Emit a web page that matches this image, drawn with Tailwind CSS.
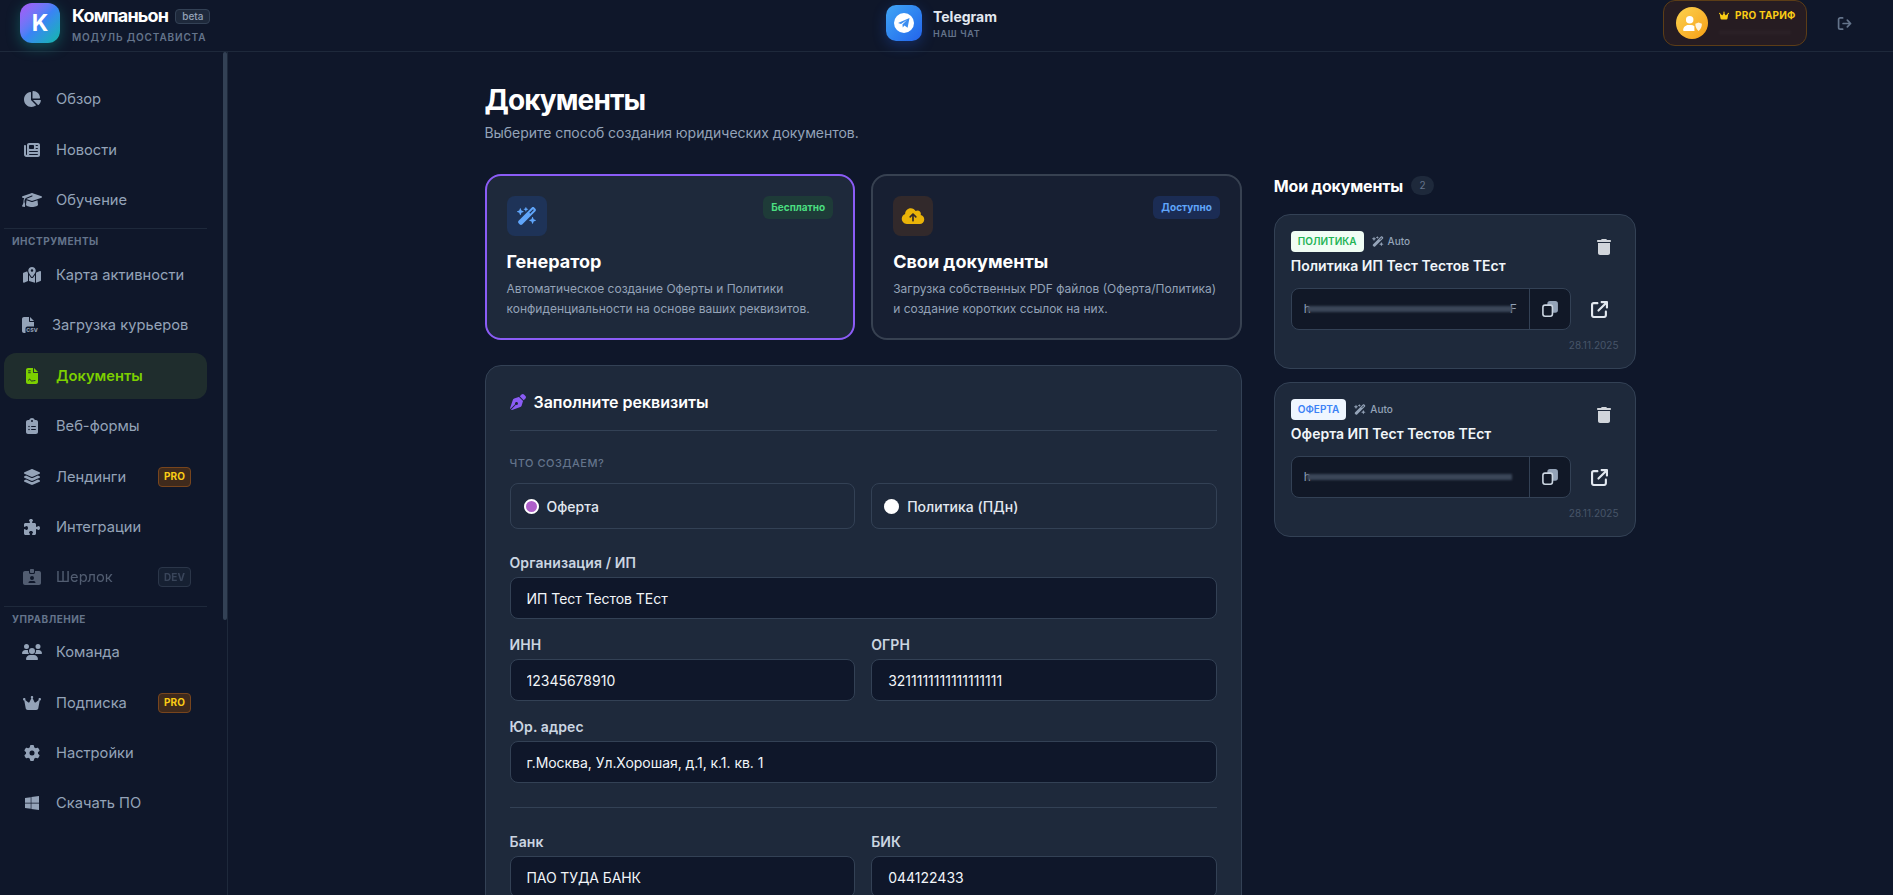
<!DOCTYPE html>
<html lang="ru">
<head>
  <meta charset="UTF-8">
  <meta name="viewport" content="width=device-width, initial-scale=1.0">
  <title>Компаньон - Документы</title>
  <script src="https://cdn.jsdelivr.net/npm/@tailwindcss/browser@4"></script>
</head>
<body class="h-screen overflow-hidden bg-[#0f172a] text-white [font-family:Inter,sans-serif]">

  <!-- top bar -->
  <header class="grid h-[52px] grid-cols-[1fr_121px_1fr] items-center border-b border-[#1e293b] pb-[8px]">
    <div class="flex items-center pl-[20px]">
      <div class="flex h-10 w-10 items-center justify-center rounded-xl bg-gradient-to-br from-[#a855f7] via-[#3b82f6] to-[#14b8a6] text-[23px] font-bold shadow-[0_4px_14px_rgba(20,184,166,0.35)]">K</div>
      <div class="ml-3">
        <div class="flex items-center gap-[7px]">
          <span class="text-[18px] leading-[28px] font-bold tracking-[-0.8px]">Компаньон</span>
          <span class="rounded-[4px] border border-[#334155] bg-[#1e293b] px-[6px] text-[10px] leading-[13px] font-medium text-[#94a3b8]">beta</span>
        </div>
        <div class="text-[10px] leading-[14px] font-semibold tracking-[0.85px] text-[#64748b]">МОДУЛЬ ДОСТАВИСТА</div>
      </div>
    </div>

    <div class="flex items-center gap-[11px]">
      <div class="flex h-9 w-9 shrink-0 items-center justify-center rounded-[10px] bg-gradient-to-br from-[#42a5f5] to-[#2563eb] shadow-[0_4px_14px_rgba(37,99,235,0.3)]">
        <svg viewBox="0 0 20 20" class="h-5 w-5"><circle cx="10" cy="10" r="10" fill="#fff"/><path d="M4 10 15.500 5 13.600 14.800 10.400 12.600 8.800 14.400 8.400 11.500 13 7 7 10.900Z" fill="#3b8df0"/></svg>
      </div>
      <div>
        <div class="text-[14px] leading-[20px] font-bold text-[#e2e8f0]">Telegram</div>
        <div class="mt-px text-[9px] leading-[12px] font-semibold tracking-[0.7px] text-[#64748b]">НАШ ЧАТ</div>
      </div>
    </div>

    <div class="flex items-center justify-end gap-[30px] pr-[41px]">
      <div class="flex h-[46px] w-[144px] items-center gap-[11px] rounded-xl border border-[#5c3d17] bg-[#261c22] pl-[12px]">
        <div class="flex h-8 w-8 items-center justify-center rounded-full bg-gradient-to-br from-[#fcd34d] to-[#f59e0b]">
          <svg viewBox="0 0 640 512" class="h-[15px] w-[19px]" fill="#fff"><path d="M224 256A128 128 0 1 0 224 0a128 128 0 1 0 0 256zm-45.700 48C79.800 304 0 383.800 0 482.300C0 498.700 13.300 512 29.700 512H392.600c-5.400-9.400-8.600-20.300-8.600-32V352c0-2.100 .1-4.200 .3-6.300c-31-26-71-41.700-114.600-41.700H178.300z"/><path d="M528 224l112 44c0 100-35 190-112 244-77-54-112-144-112-244z" opacity="0.85"/></svg>
        </div>
        <div class="flex flex-col self-start pt-[7px]">
          <div class="flex items-center gap-[6px] text-[10px] leading-[15px] font-bold tracking-[0.2px] text-[#facc15]">
            <svg viewBox="0 0 576 512" class="h-[9px] w-[10px]" fill="#facc15"><path d="M309 106c11.400-7 19-19.700 19-34c0-22.100-17.900-40-40-40s-40 17.900-40 40c0 14.400 7.600 27 19 34L209.700 220.600c-9.100 18.200-32.700 23.400-48.600 10.700L72 160c5-6.700 8-15 8-24c0-22.100-17.900-40-40-40S0 113.900 0 136s17.900 40 40 40c.2 0 .5 0 .7 0L86.400 427.400c5.500 30.400 32 52.600 63 52.600H426.600c30.900 0 57.400-22.100 63-52.600L535.300 176c.2 0 .5 0 .7 0c22.100 0 40-17.900 40-40s-17.900-40-40-40s-40 17.900-40 40c0 9 3 17.300 8 24l-89.100 71.300c-15.900 12.700-39.500 7.500-48.600-10.700L309 106z"/></svg>
            PRO ТАРИФ
          </div>
          <div class="mt-[7px] h-[5px] w-[72px] bg-white/[0.02] blur-[1px]"></div>
        </div>
      </div>
      <svg viewBox="0 0 16 16" class="h-[15px] w-[15px]" fill="none" stroke="#64748b" stroke-width="1.800" stroke-linecap="round" stroke-linejoin="round"><path d="M6 2H3.500A1.800 1.800 0 0 0 1.700 3.800v8.400A1.800 1.800 0 0 0 3.500 14H6M6.500 8h8M11 4.500 14.500 8 11 11.500"/></svg>
    </div>
  </header>

  <div class="flex h-[843px]">
    <!-- sidebar -->
    <aside class="relative w-[228px] shrink-0 border-r border-[#1e293b] pl-[4px] pt-[24px]">
      <div class="absolute top-0 right-0 h-[568px] w-[4px] rounded-full bg-[#334155]"></div>
      <nav class="flex w-[203px] flex-col gap-[4px] text-[14.700px] text-[#94a3b8]">
        <a class="flex h-[46.400px] items-center gap-[14px] pl-[18px]">
          <svg viewBox="0 0 576 512" class="h-4 w-5" fill="currentColor"><path d="M304 240V16.600c0-9 7-16.600 16-16.600C443.700 0 544 100.300 544 224c0 9-7.600 16-16.600 16H304zM32 272C32 150.700 122.100 50.300 239 34.300c9.200-1.300 17 6.100 17 15.400V288L412.500 444.500c6.700 6.700 6.200 17.700-1.500 23.100C371.800 495.600 323.800 512 272 512C139.500 512 32 404.600 32 272zm526.400 16c9.300 0 16.600 7.800 15.400 17c-7.700 55.900-34.600 105.600-73.900 142.300c-6 5.600-15.400 5.200-21.200-.7L320 288H558.400z"/></svg>
          Обзор
        </a>
        <a class="flex h-[46.400px] items-center gap-[14px] pl-[18px]">
          <svg viewBox="0 0 512 512" class="h-4 w-5" fill="currentColor"><path d="M96 96c0-35.300 28.700-64 64-64H448c35.300 0 64 28.700 64 64V416c0 35.300-28.700 64-64 64H80c-44.200 0-80-35.800-80-80V128c0-17.700 14.300-32 32-32s32 14.300 32 32V400c0 8.800 7.200 16 16 16s16-7.200 16-16V96zm64 24v80c0 13.300 10.700 24 24 24H296c13.300 0 24-10.700 24-24V120c0-13.300-10.700-24-24-24H184c-13.300 0-24 10.700-24 24zm208-8c0 8.800 7.200 16 16 16h48c8.800 0 16-7.200 16-16s-7.200-16-16-16H384c-8.800 0-16 7.200-16 16zm0 96c0 8.800 7.200 16 16 16h48c8.800 0 16-7.200 16-16s-7.200-16-16-16H384c-8.800 0-16 7.200-16 16zM160 304c0 8.800 7.200 16 16 16H432c8.800 0 16-7.200 16-16s-7.200-16-16-16H176c-8.800 0-16 7.200-16 16zm0 96c0 8.800 7.200 16 16 16H432c8.800 0 16-7.200 16-16s-7.200-16-16-16H176c-8.800 0-16 7.200-16 16z"/></svg>
          Новости
        </a>
        <a class="flex h-[46.400px] items-center gap-[14px] pl-[18px]">
          <svg viewBox="0 0 640 512" class="h-4 w-5" fill="currentColor"><path d="M320 32c-8.100 0-16.100 1.400-23.700 4.100L15.800 137.400C6.300 140.900 0 149.900 0 160s6.300 19.100 15.800 22.600l57.900 20.900C57.300 229.300 48 259.800 48 291.900v28.100c0 28.400-10.800 57.700-22.300 80.800c-6.500 13-13.900 25.800-22.500 37.600C0 442.700-.9 448.300 .9 453.400s6 8.900 11.200 10.200l64 16c4.200 1.100 8.700 .3 12.400-2s6.300-6.100 7.100-10.400c8.600-42.800 4.300-81.200-2.100-108.700C90.300 344.300 86 329.800 80 316.500V291.900c0-30.200 10.200-58.700 27.900-81.500c12.900-15.500 29.600-28 49.200-35.700l157-61.700c8.200-3.200 17.500 .8 20.700 9s-.8 17.500-9 20.700l-157 61.700c-12.400 4.900-23.300 12.400-32.200 21.600l159.600 57.600c7.600 2.700 15.600 4.100 23.700 4.100s16.100-1.400 23.700-4.100L624.200 182.600c9.500-3.400 15.800-12.500 15.800-22.600s-6.300-19.100-15.800-22.600L343.700 36.100C336.100 33.400 328.100 32 320 32zM128 408c0 35.300 86 72 192 72s192-36.700 192-72L496.700 262.600 354.500 314c-11.100 4-22.800 6-34.500 6s-23.500-2-34.500-6L143.300 262.600 128 408z"/></svg>
          Обучение
        </a>

        <div class="mt-px -mb-[4px] h-[23.600px] border-t border-[#1e293b] pt-[6px] pl-[8px] text-[10px] leading-[12px] font-bold tracking-[0.5px] text-[#64748b]">ИНСТРУМЕНТЫ</div>

        <a class="flex h-[46.400px] items-center gap-[14px] pl-[18px]">
          <svg viewBox="0 0 576 512" class="h-4 w-5" fill="currentColor"><path d="M408 120c0 54.600-73.100 151.900-105.200 192c-7.700 9.600-22 9.600-29.600 0C241.100 271.900 168 174.600 168 120C168 53.700 221.700 0 288 0s120 53.700 120 120zm8 80.400c3.500-6.900 6.700-13.800 9.600-20.600c.5-1.200 1-2.500 1.500-3.700l116-46.400C558.900 123.400 576 135 576 152V422.800c0 9.800-6 18.600-15.100 22.300L416 503V200.400zM137.600 138.300c2.400 14.100 7.200 28.300 12.800 41.500c2.900 6.800 6.100 13.700 9.600 20.600V451.800L32.900 502.700C17.100 509 0 497.400 0 480.400V209.600c0-9.800 6-18.600 15.100-22.300l122.600-49zM327.800 332c13.900-17.400 35.700-45.700 56.200-77V504.300L192 449.400V255c20.500 31.300 42.300 59.600 56.200 77c20.500 25.600 59.100 25.600 79.600 0zM288 152a40 40 0 1 0 0-80 40 40 0 1 0 0 80z"/></svg>
          Карта активности
        </a>
        <a class="flex h-[46.400px] items-center gap-[14px] pl-[18px]">
          <svg viewBox="0 0 512 512" class="h-4 w-4 overflow-visible" fill="currentColor"><path d="M0 64C0 28.700 28.700 0 64 0H224V128c0 17.700 14.300 32 32 32H384V304H176c-35.300 0-64 28.700-64 64V512H64c-35.300 0-64-28.700-64-64V64zM384 128H256V0L384 128z"/><text x="135" y="490" font-size="170" font-weight="800" font-family="Inter, sans-serif">CSV</text></svg>
          Загрузка курьеров
        </a>
        <a class="flex h-[46.400px] items-center gap-[14px] rounded-xl bg-[#1f2d2d] pl-[18px] font-semibold text-[#7ccf00]">
          <svg viewBox="0 0 384 512" class="h-4 w-5" fill="currentColor"><path d="M64 0C28.700 0 0 28.700 0 64V448c0 35.300 28.700 64 64 64H320c35.300 0 64-28.700 64-64V160H256c-17.700 0-32-14.300-32-32V0H64zM256 0V128H384L256 0z"/><path d="M70 90h80M70 150h80M80 400c40-90 50-30 70 0s50 10 150 0" fill="none" stroke="#1f2d2d" stroke-width="30"/></svg>
          Документы
        </a>
        <a class="flex h-[46.400px] items-center gap-[14px] pl-[18px]">
          <svg viewBox="0 0 384 512" class="h-4 w-5" fill="currentColor"><path d="M192 0c-41.800 0-77.400 26.700-90.500 64H64C28.700 64 0 92.700 0 128V448c0 35.300 28.700 64 64 64H320c35.300 0 64-28.700 64-64V128c0-35.300-28.700-64-64-64H282.500C269.400 26.700 233.800 0 192 0zm0 64a32 32 0 1 1 0 64 32 32 0 1 1 0-64zM72 272a24 24 0 1 1 48 0 24 24 0 1 1 -48 0zm104-16H304c8.800 0 16 7.200 16 16s-7.200 16-16 16H176c-8.800 0-16-7.200-16-16s7.200-16 16-16zM72 368a24 24 0 1 1 48 0 24 24 0 1 1 -48 0zm88 0c0-8.800 7.200-16 16-16H304c8.800 0 16 7.200 16 16s-7.200 16-16 16H176c-8.800 0-16-7.200-16-16z"/></svg>
          Веб-формы
        </a>
        <a class="flex h-[46.400px] items-center pl-[18px]">
          <svg viewBox="0 0 576 512" class="mr-[14px] h-4 w-5" fill="currentColor"><path d="M264.500 5.200c14.900-6.900 32.100-6.900 47 0l218.600 101c8.500 3.900 13.900 12.400 13.900 21.800s-5.400 17.900-13.900 21.800l-218.600 101c-14.900 6.900-32.100 6.900-47 0L45.900 149.800C37.400 145.800 32 137.300 32 128s5.400-17.900 13.900-21.800L264.500 5.200zM476.900 209.600l53.200 24.600c8.500 3.900 13.900 12.400 13.900 21.800s-5.400 17.900-13.900 21.800l-218.600 101c-14.900 6.900-32.100 6.900-47 0L45.900 277.800C37.400 273.800 32 265.300 32 256s5.400-17.900 13.900-21.800l53.200-24.600 152 70.200c23.400 10.800 50.400 10.800 73.800 0l152-70.200zm-152 198.200l152-70.200 53.200 24.600c8.500 3.900 13.900 12.400 13.900 21.800s-5.400 17.900-13.900 21.800l-218.600 101c-14.900 6.900-32.100 6.900-47 0L45.900 405.800C37.400 401.800 32 393.300 32 384s5.400-17.900 13.900-21.800l53.200-24.600 152 70.200c23.400 10.800 50.400 10.800 73.800 0z"/></svg>
          Лендинги
          <span class="mr-[16px] ml-auto flex h-[20px] w-[33px] items-center justify-center rounded-[4px] border border-[#78451d] bg-[#3f2a1c] text-[10px] font-bold text-[#facc15]">PRO</span>
        </a>
        <a class="flex h-[46.400px] items-center gap-[14px] pl-[18px]">
          <svg viewBox="0 0 512 512" class="h-4 w-5" fill="currentColor"><path d="M192 104.800c0-9.200-5.800-17.300-13.200-22.800C167.200 73.300 160 61.300 160 48c0-26.500 28.700-48 64-48s64 21.500 64 48c0 13.300-7.200 25.300-18.800 34c-7.400 5.500-13.200 13.600-13.200 22.800c0 12.800 10.400 23.200 23.200 23.200H336c26.500 0 48 21.500 48 48v56.800c0 12.800 10.400 23.200 23.200 23.200c9.200 0 17.300-5.800 22.800-13.200c8.700-11.600 20.700-18.800 34-18.800c26.500 0 48 28.700 48 64s-21.500 64-48 64c-13.300 0-25.300-7.200-34-18.800c-5.500-7.400-13.600-13.200-22.800-13.200c-12.800 0-23.200 10.400-23.200 23.200V464c0 26.500-21.500 48-48 48H279.200c-12.800 0-23.200-10.400-23.200-23.200c0-9.200 5.800-17.300 13.200-22.800c11.600-8.700 18.800-20.700 18.800-34c0-26.500-28.700-48-64-48s-64 21.500-64 48c0 13.300 7.200 25.300 18.800 34c7.400 5.500 13.200 13.600 13.200 22.800c0 12.800-10.400 23.200-23.200 23.200H48c-26.500 0-48-21.500-48-48V343.200C0 330.400 10.400 320 23.200 320c9.200 0 17.300 5.800 22.800 13.200C54.700 344.800 66.700 352 80 352c26.500 0 48-28.700 48-64s-21.500-64-48-64c-13.300 0-25.300 7.200-34 18.800C40.500 250.200 32.400 256 23.200 256C10.400 256 0 245.600 0 232.800V176c0-26.500 21.500-48 48-48H168.800c12.800 0 23.200-10.400 23.200-23.200z"/></svg>
          Интеграции
        </a>
        <a class="flex h-[46.400px] items-center pl-[18px] opacity-50">
          <svg viewBox="0 0 576 512" class="mr-[14px] h-4 w-5" fill="currentColor"><path d="M256 0h64c17.700 0 32 14.300 32 32V96c0 17.700-14.300 32-32 32H256c-17.700 0-32-14.300-32-32V32c0-17.700 14.300-32 32-32zM64 64H192v48c0 26.500 21.500 48 48 48h96c26.500 0 48-21.500 48-48V64H512c35.300 0 64 28.700 64 64V448c0 35.300-28.700 64-64 64H64c-35.300 0-64-28.700-64-64V128C0 92.700 28.700 64 64 64zM176 437.300c0 5.900 4.800 10.700 10.700 10.700H389.300c5.900 0 10.700-4.800 10.700-10.700c0-29.500-23.900-53.300-53.300-53.300H229.300c-29.500 0-53.300 23.900-53.300 53.300zM288 352a64 64 0 1 0 0-128 64 64 0 1 0 0 128z"/></svg>
          Шерлок
          <span class="mr-[16px] ml-auto flex h-[20px] w-[33px] items-center justify-center rounded-[4px] border border-[#475569] bg-[#1e293b] text-[10px] font-bold text-[#64748b]">DEV</span>
        </a>

        <div class="mt-px -mb-[4px] h-[23.600px] border-t border-[#1e293b] pt-[6px] pl-[8px] text-[10px] leading-[12px] font-bold tracking-[0.5px] text-[#64748b]">УПРАВЛЕНИЕ</div>

        <a class="flex h-[46.400px] items-center gap-[14px] pl-[18px]">
          <svg viewBox="0 0 640 512" class="h-4 w-5" fill="currentColor"><path d="M144 0a80 80 0 1 1 0 160A80 80 0 1 1 144 0zM512 0a80 80 0 1 1 0 160A80 80 0 1 1 512 0zM0 298.700C0 239.800 47.800 192 106.700 192h42.700c15.900 0 31 3.500 44.600 9.700c-1.300 7.200-1.900 14.700-1.900 22.300c0 38.200 16.800 72.500 43.300 96c-.2 0-.4 0-.7 0H21.300C9.600 320 0 310.400 0 298.700zM405.300 320c-.2 0-.4 0-.7 0c26.600-23.500 43.300-57.800 43.300-96c0-7.600-.7-15-1.900-22.300c13.600-6.300 28.700-9.700 44.600-9.700h42.700C592.200 192 640 239.800 640 298.700c0 11.800-9.600 21.300-21.300 21.300H405.300zM224 224a96 96 0 1 1 192 0 96 96 0 1 1 -192 0zM128 485.300C128 411.700 187.700 352 261.300 352H378.700C452.300 352 512 411.700 512 485.300c0 14.700-11.900 26.700-26.700 26.700H154.700c-14.700 0-26.700-11.900-26.700-26.700z"/></svg>
          Команда
        </a>
        <a class="flex h-[46.400px] items-center pl-[18px]">
          <svg viewBox="0 0 576 512" class="mr-[14px] h-4 w-5" fill="currentColor"><path d="M309 106c11.400-7 19-19.700 19-34c0-22.100-17.900-40-40-40s-40 17.900-40 40c0 14.400 7.600 27 19 34L209.700 220.600c-9.100 18.200-32.700 23.400-48.600 10.700L72 160c5-6.700 8-15 8-24c0-22.100-17.900-40-40-40S0 113.900 0 136s17.900 40 40 40c.2 0 .5 0 .7 0L86.400 427.400c5.500 30.400 32 52.600 63 52.600H426.600c30.900 0 57.400-22.100 63-52.600L535.300 176c.2 0 .5 0 .7 0c22.100 0 40-17.900 40-40s-17.900-40-40-40s-40 17.900-40 40c0 9 3 17.300 8 24l-89.100 71.300c-15.900 12.700-39.500 7.500-48.600-10.700L309 106z"/></svg>
          Подписка
          <span class="mr-[16px] ml-auto flex h-[20px] w-[33px] items-center justify-center rounded-[4px] border border-[#78451d] bg-[#3f2a1c] text-[10px] font-bold text-[#facc15]">PRO</span>
        </a>
        <a class="flex h-[46.400px] items-center gap-[14px] pl-[18px]">
          <svg viewBox="0 0 512 512" class="h-4 w-5" fill="currentColor"><path fill-rule="evenodd" d="M495.900 166.600c3.200 8.700 .5 18.400-6.400 24.600l-43.300 39.400c1.100 8.300 1.700 16.800 1.700 25.400s-.6 17.100-1.700 25.400l43.300 39.400c6.900 6.200 9.600 15.900 6.400 24.600c-4.400 11.900-9.700 23.300-15.800 34.300l-4.700 8.100c-6.600 11-14 21.400-22.100 31.200c-5.900 7.200-15.700 9.600-24.500 6.800l-55.700-17.700c-13.400 10.300-28.200 18.900-44 25.400l-12.500 57.100c-2 9.100-9 16.300-18.200 17.800c-13.800 2.300-28 3.500-42.500 3.500s-28.700-1.200-42.500-3.500c-9.200-1.500-16.200-8.700-18.200-17.800l-12.500-57.100c-15.800-6.500-30.600-15.100-44-25.400L83.100 425.900c-8.800 2.800-18.600 .3-24.500-6.800c-8.100-9.800-15.500-20.200-22.100-31.200l-4.700-8.100c-6.100-11-11.400-22.400-15.800-34.300c-3.200-8.700-.5-18.400 6.400-24.600l43.300-39.400C64.600 273.100 64 264.600 64 256s.6-17.100 1.700-25.400L22.400 191.200c-6.900-6.200-9.600-15.900-6.400-24.600c4.400-11.900 9.700-23.300 15.800-34.300l4.700-8.100c6.600-11 14-21.400 22.100-31.200c5.900-7.200 15.700-9.600 24.500-6.800l55.700 17.700c13.400-10.300 28.200-18.900 44-25.400l12.500-57.100c2-9.100 9-16.300 18.200-17.800C227.300 1.200 241.500 0 256 0s28.700 1.200 42.500 3.500c9.200 1.500 16.200 8.700 18.200 17.800l12.500 57.100c15.800 6.500 30.600 15.100 44 25.400l55.700-17.700c8.800-2.800 18.600-.3 24.500 6.800c8.100 9.800 15.500 20.200 22.100 31.200l4.700 8.100c6.100 11 11.400 22.400 15.800 34.300zM256 336a80 80 0 1 0 0-160 80 80 0 1 0 0 160z"/></svg>
          Настройки
        </a>
        <a class="flex h-[46.400px] items-center gap-[14px] pl-[18px]">
          <svg viewBox="0 0 448 512" class="h-4 w-5" fill="currentColor"><path d="M0 93.700l183.600-25.300v177.400H0V93.700zm0 324.600l183.600 25.300V268.400H0v149.900zm203.800 28L448 480V268.400H203.800v177.900zm0-380.600v180.100H448V32L203.800 65.700z"/></svg>
          Скачать ПО
        </a>
      </nav>
    </aside>

    <!-- content -->
    <main class="flex-1 overflow-hidden pt-[30px]">
      <div class="mx-auto w-[1152px]">
        <h1 class="text-[28px] leading-[36px] font-bold tracking-[-0.9px]">Документы</h1>
        <p class="mt-[5px] text-[14px] leading-[20px] tracking-[-0.05px] text-[#94a3b8]">Выберите способ создания юридических документов.</p>

        <div class="mt-[31px] grid grid-cols-3 gap-8">
          <div class="col-span-2">
            <div class="grid grid-cols-2 gap-4">
              <div class="h-[166px] rounded-2xl border-2 border-[#8b5cf6] bg-[#1e293b] p-5">
                <div class="flex items-start justify-between">
                  <div class="flex h-10 w-10 items-center justify-center rounded-lg bg-[#1e3358]">
                    <svg viewBox="0 0 576 512" class="h-[18px] w-5" fill="#60a5fa"><path d="M234.700 42.700L197 56.800c-3 1.100-5 4-5 7.200s2 6.100 5 7.200l37.700 14.100L248.800 123c1.100 3 4 5 7.200 5s6.100-2 7.200-5l14.100-37.700L315 71.200c3-1.100 5-4 5-7.200s-2-6.100-5-7.200L277.300 42.700 263.200 5c-1.100-3-4-5-7.200-5s-6.100 2-7.200 5L234.700 42.700zM46.100 395.400c-18.700 18.700-18.700 49.100 0 67.900l34.600 34.600c18.700 18.700 49.100 18.700 67.900 0L529.900 116.500c18.700-18.700 18.700-49.100 0-67.900L495.300 14.100c-18.700-18.700-49.100-18.700-67.900 0L46.100 395.400zM484.600 82.600l-105 105-23.300-23.300 105-105 23.300 23.300zM7.500 117.200C3 118.900 0 123.200 0 128s3 9.100 7.500 10.800L64 160l21.200 56.500c1.700 4.500 6 7.500 10.800 7.500s9.100-3 10.800-7.500L128 160l56.500-21.200c4.500-1.700 7.500-6 7.500-10.800s-3-9.100-7.500-10.800L128 96 106.800 39.500C105.100 35 100.800 32 96 32s-9.100 3-10.800 7.500L64 96 7.500 117.200zm352 256c-4.500 1.700-7.500 6-7.500 10.800s3 9.100 7.500 10.800L416 416l21.200 56.500c1.700 4.500 6 7.500 10.800 7.500s9.100-3 10.800-7.500L480 416l56.500-21.200c4.500-1.700 7.500-6 7.500-10.800s-3-9.100-7.500-10.800L480 352l-21.200-56.500c-1.700-4.500-6-7.500-10.800-7.500s-9.100 3-10.800 7.500L416 352l-56.500 21.200z"/></svg>
                  </div>
                  <span class="rounded-md bg-[#1e3b38] px-2 py-[4px] text-[10px] leading-[15px] font-bold text-[#4ade80]">Бесплатно</span>
                </div>
                <h3 class="mt-[12px] text-[18px] leading-[28px] font-bold">Генератор</h3>
                <p class="mt-[3px] text-[12px] leading-[19.500px] text-[#94a3b8]">Автоматическое создание Оферты и Политики конфиденциальности на основе ваших реквизитов.</p>
              </div>

              <div class="h-[166px] rounded-2xl border-2 border-[#374151] bg-[#171f32] p-5">
                <div class="flex items-start justify-between">
                  <div class="flex h-10 w-10 items-center justify-center rounded-lg bg-[#32292b]">
                    <svg viewBox="0 0 640 512" class="h-[18px] w-6" fill="#eab308"><path d="M144 480C64.500 480 0 415.500 0 336c0-62.800 40.200-116.200 96.200-135.900c-.1-2.700-.2-5.400-.2-8.100c0-88.400 71.600-160 160-160c59.300 0 111 32.200 138.700 80.200C409.900 102 428.300 96 448 96c53 0 96 43 96 96c0 12.200-2.300 23.800-6.400 34.600C596 238.400 640 290.100 640 352c0 70.700-57.300 128-128 128H144zm79-217c-9.400 9.400-9.400 24.600 0 33.900s24.600 9.400 33.900 0l39-39V392c0 13.300 10.700 24 24 24s24-10.700 24-24V257.900l39 39c9.400 9.400 24.600 9.400 33.900 0s9.400-24.600 0-33.900l-80-80c-9.400-9.400-24.600-9.400-33.900 0l-80 80z"/></svg>
                  </div>
                  <span class="rounded-md bg-[#1b2c54] px-2 py-[4px] text-[10px] leading-[15px] font-bold text-[#60a5fa]">Доступно</span>
                </div>
                <h3 class="mt-[12px] text-[18px] leading-[28px] font-bold">Свои документы</h3>
                <p class="mt-[3px] text-[12px] leading-[19.500px] text-[#94a3b8]">Загрузка собственных PDF файлов (Оферта/Политика) и создание коротких ссылок на них.</p>
              </div>
            </div>

            <section class="mt-[25px] rounded-2xl border border-[#334155] bg-[#1e293b] px-6 pt-[24px] pb-8">
              <div class="flex items-center gap-[8px] border-b border-[#334155] pb-[16px]">
                <svg viewBox="0 0 512 512" class="h-4 w-4" fill="#8b5cf6"><path d="M368.400 18.300L312.700 74.100 437.900 199.300l55.700-55.700c21.900-21.900 21.900-57.300 0-79.200L447.600 18.300c-21.900-21.900-57.300-21.900-79.200 0zM288 94.600l-9.200 2.800L134.700 140.600c-19.900 6-35.700 21.200-42.300 41L3.800 445.800c-3.800 11.300-1 23.900 7.300 32.400L164.700 324.700c-3-6.300-4.700-13.300-4.700-20.700c0-26.500 21.500-48 48-48s48 21.500 48 48s-21.500 48-48 48c-7.400 0-14.400-1.700-20.700-4.700L33.700 500.900c8.600 8.300 21.100 11.200 32.400 7.300l264.300-88.600c19.700-6.600 35-22.400 41-42.300l43.200-144.100 2.800-9.200L288 94.600z"/></svg>
                <h2 class="text-[16px] leading-[24px] font-semibold">Заполните реквизиты</h2>
              </div>

              <div class="mt-[24px] text-[11px] leading-[16px] font-medium tracking-[0.5px] text-[#64748b]">ЧТО СОЗДАЕМ?</div>
              <div class="mt-[12px] grid grid-cols-2 gap-4">
                <label class="flex h-[46px] items-center gap-[8px] rounded-lg border border-[#334155] pl-[13px] text-[14px] font-medium text-[#e2e8f0]">
                  <input type="radio" name="kind" checked class="h-[15px] w-[15px] appearance-none rounded-full border-2 border-white bg-[#ae5fc9]">
                  Оферта
                </label>
                <label class="flex h-[46px] items-center gap-[8px] rounded-lg border border-[#334155] pl-[12px] text-[14px] font-medium text-[#e2e8f0]">
                  <input type="radio" name="kind" class="h-[15px] w-[15px] appearance-none rounded-full bg-white">
                  Политика (ПДн)
                </label>
              </div>

              <div class="mt-[24px]">
                <label class="block text-[14px] leading-[20px] font-semibold tracking-[0.1px] text-[#cbd5e1]">Организация / ИП</label>
                <input value="ИП Тест Тестов ТЕст" class="mt-[4px] h-[42px] w-full rounded-lg border border-[#334155] bg-[#0f172a] px-4 text-[14px] tracking-[-0.05px] text-[#f1f5f9]">
              </div>
              <div class="mt-[16px] grid grid-cols-2 gap-4">
                <div>
                  <label class="block text-[14px] leading-[20px] font-semibold tracking-[0.1px] text-[#cbd5e1]">ИНН</label>
                  <input value="12345678910" class="mt-[4px] h-[42px] w-full rounded-lg border border-[#334155] bg-[#0f172a] px-4 text-[14px] text-[#f1f5f9]">
                </div>
                <div>
                  <label class="block text-[14px] leading-[20px] font-semibold tracking-[0.1px] text-[#cbd5e1]">ОГРН</label>
                  <input value="3211111111111111111" class="mt-[4px] h-[42px] w-full rounded-lg border border-[#334155] bg-[#0f172a] px-4 text-[14px] text-[#f1f5f9]">
                </div>
              </div>
              <div class="mt-[16px]">
                <label class="block text-[14px] leading-[20px] font-semibold tracking-[0.1px] text-[#cbd5e1]">Юр. адрес</label>
                <input value="г.Москва, Ул.Хорошая, д.1, к.1. кв. 1" class="mt-[4px] h-[42px] w-full rounded-lg border border-[#334155] bg-[#0f172a] px-4 text-[14px] tracking-[-0.05px] text-[#f1f5f9]">
              </div>
              <div class="my-[24px] border-t border-[#334155]"></div>
              <div class="grid grid-cols-2 gap-4">
                <div>
                  <label class="block text-[14px] leading-[20px] font-semibold tracking-[0.1px] text-[#cbd5e1]">Банк</label>
                  <input value="ПАО ТУДА БАНК" class="mt-[4px] h-[42px] w-full rounded-lg border border-[#334155] bg-[#0f172a] px-4 text-[14px] tracking-[-0.1px] text-[#f1f5f9]">
                </div>
                <div>
                  <label class="block text-[14px] leading-[20px] font-semibold tracking-[0.1px] text-[#cbd5e1]">БИК</label>
                  <input value="044122433" class="mt-[4px] h-[42px] w-full rounded-lg border border-[#334155] bg-[#0f172a] px-4 text-[14px] text-[#f1f5f9]">
                </div>
              </div>
            </section>
          </div>

          <!-- saved documents -->
          <div>
            <div class="flex h-[23px] items-center gap-[8px]">
              <h2 class="text-[16px] font-bold tracking-[-0.2px]">Мои документы</h2>
              <span class="flex h-[19px] w-[23px] items-center justify-center rounded-full bg-[#1e293b] text-[10px] text-[#64748b]">2</span>
            </div>

            <div class="mt-[17px] flex flex-col gap-[13px]">
              <article class="relative h-[155px] rounded-2xl border border-[#334155] bg-[#1e293b] px-[16px] pt-[16px]">
                <div class="flex h-[21px] items-center gap-[8px]">
                  <span class="flex h-[21px] items-center rounded-[4px] bg-[#f0fdf4] px-[7px] text-[10px] font-semibold text-[#22b455]">ПОЛИТИКА</span>
                  <span class="flex items-center gap-[4px] text-[10px] font-medium text-[#94a3b8]">
                    <svg viewBox="0 0 576 512" class="h-[11px] w-[12px]" fill="currentColor"><path d="M234.700 42.700L197 56.800c-3 1.100-5 4-5 7.200s2 6.100 5 7.200l37.700 14.100L248.800 123c1.100 3 4 5 7.200 5s6.100-2 7.200-5l14.100-37.700L315 71.200c3-1.100 5-4 5-7.200s-2-6.100-5-7.200L277.300 42.700 263.200 5c-1.100-3-4-5-7.200-5s-6.100 2-7.200 5L234.700 42.700zM46.100 395.400c-18.700 18.700-18.700 49.100 0 67.900l34.600 34.600c18.700 18.700 49.100 18.700 67.900 0L529.900 116.500c18.700-18.700 18.700-49.100 0-67.900L495.300 14.100c-18.700-18.700-49.100-18.700-67.900 0L46.100 395.400zM484.600 82.600l-105 105-23.300-23.300 105-105 23.300 23.300zM7.500 117.200C3 118.900 0 123.200 0 128s3 9.100 7.500 10.800L64 160l21.200 56.500c1.700 4.500 6 7.500 10.800 7.500s9.100-3 10.800-7.500L128 160l56.500-21.200c4.500-1.700 7.500-6 7.500-10.800s-3-9.100-7.500-10.800L128 96 106.800 39.500C105.100 35 100.800 32 96 32s-9.100 3-10.800 7.500L64 96 7.500 117.200zm352 256c-4.500 1.700-7.500 6-7.500 10.800s3 9.100 7.500 10.800L416 416l21.200 56.500c1.700 4.500 6 7.500 10.800 7.500s9.100-3 10.800-7.500L480 416l56.500-21.200c4.500-1.700 7.500-6 7.500-10.800s-3-9.100-7.500-10.800L480 352l-21.200-56.500c-1.700-4.500-6-7.500-10.800-7.500s-9.100 3-10.800 7.500L416 352l-56.500 21.200z"/></svg>
                    Auto
                  </span>
                </div>
                <svg viewBox="0 0 448 512" class="absolute top-[24px] right-[24px] h-4 w-[14px]" fill="#d1d5db"><path d="M135.200 17.700C140.600 6.800 151.700 0 163.800 0H284.200c12.100 0 23.200 6.800 28.600 17.700L320 32h96c17.700 0 32 14.300 32 32s-14.300 32-32 32H32C14.300 96 0 81.700 0 64S14.300 32 32 32h96l7.200-14.300zM32 128H416V448c0 35.300-28.700 64-64 64H96c-35.300 0-64-28.700-64-64V128z"/></svg>
                <h3 class="mt-[4px] text-[14px] leading-[20px] font-semibold text-[#f1f5f9]">Политика ИП Тест Тестов ТЕст</h3>
                <div class="mt-[12px] flex items-center">
                  <div class="relative flex h-[42px] w-[280px] rounded-lg border border-[#334155] bg-[#111827]">
                    <div class="flex flex-1 items-center justify-between px-[12px] text-[12px] text-[#94a3b8]"><span>h</span><span>F</span></div>
                    <div class="absolute top-[17px] left-[15px] h-[6px] w-[205px] bg-[#3b4658] blur-[1px]"></div>
                    <div class="flex w-[41px] items-center justify-center border-l border-[#334155]">
                      <svg viewBox="0 0 17 17" class="h-[18px] w-[18px]"><rect x="6" y="1" width="10" height="11" rx="2.500" fill="#94a3b8"/><rect x="1.800" y="4.800" width="9" height="10.500" rx="2" fill="#111827" stroke="#cbd5e1" stroke-width="1.500"/></svg>
                    </div>
                  </div>
                  <svg viewBox="0 0 512 512" class="ml-[20px] h-[17px] w-[17px]" fill="#e2e8f0"><path d="M320 0c-17.700 0-32 14.300-32 32s14.300 32 32 32h82.700L201.400 265.400c-12.500 12.500-12.500 32.800 0 45.300s32.800 12.500 45.300 0L448 109.300V192c0 17.700 14.300 32 32 32s32-14.300 32-32V32c0-17.700-14.300-32-32-32H320zM80 32C35.800 32 0 67.800 0 112V432c0 44.200 35.800 80 80 80H400c44.200 0 80-35.800 80-80V320c0-17.700-14.300-32-32-32s-32 14.300-32 32V432c0 8.800-7.200 16-16 16H80c-8.800 0-16-7.200-16-16V112c0-8.800 7.200-16 16-16H192c17.700 0 32-14.300 32-32s-14.300-32-32-32H80z"/></svg>
                </div>
                <div class="mt-[8px] pr-[1px] text-right text-[10px] leading-[15px] text-[#475569]">28.11.2025</div>
              </article>

              <article class="relative h-[155px] rounded-2xl border border-[#334155] bg-[#1e293b] px-[16px] pt-[16px]">
                <div class="flex h-[21px] items-center gap-[8px]">
                  <span class="flex h-[21px] items-center rounded-[4px] bg-[#eff6ff] px-[7px] text-[10px] font-semibold text-[#3b82f6]">ОФЕРТА</span>
                  <span class="flex items-center gap-[4px] text-[10px] font-medium text-[#94a3b8]">
                    <svg viewBox="0 0 576 512" class="h-[11px] w-[12px]" fill="currentColor"><path d="M234.700 42.700L197 56.800c-3 1.100-5 4-5 7.200s2 6.100 5 7.200l37.700 14.100L248.800 123c1.100 3 4 5 7.200 5s6.100-2 7.200-5l14.100-37.700L315 71.200c3-1.100 5-4 5-7.200s-2-6.100-5-7.200L277.300 42.700 263.200 5c-1.100-3-4-5-7.200-5s-6.100 2-7.200 5L234.700 42.700zM46.100 395.400c-18.700 18.700-18.700 49.100 0 67.900l34.600 34.600c18.700 18.700 49.100 18.700 67.900 0L529.900 116.500c18.700-18.700 18.700-49.100 0-67.900L495.300 14.100c-18.700-18.700-49.100-18.700-67.900 0L46.100 395.400zM484.600 82.600l-105 105-23.300-23.300 105-105 23.300 23.300zM7.500 117.200C3 118.900 0 123.200 0 128s3 9.100 7.500 10.800L64 160l21.200 56.500c1.700 4.500 6 7.500 10.800 7.500s9.100-3 10.800-7.500L128 160l56.500-21.200c4.500-1.700 7.500-6 7.500-10.800s-3-9.100-7.500-10.800L128 96 106.800 39.500C105.100 35 100.800 32 96 32s-9.100 3-10.800 7.500L64 96 7.500 117.200zm352 256c-4.500 1.700-7.500 6-7.500 10.800s3 9.100 7.500 10.800L416 416l21.200 56.500c1.700 4.500 6 7.500 10.800 7.500s9.100-3 10.800-7.500L480 416l56.500-21.200c4.500-1.700 7.500-6 7.500-10.800s-3-9.100-7.500-10.800L480 352l-21.200-56.500c-1.700-4.500-6-7.500-10.800-7.500s-9.100 3-10.800 7.500L416 352l-56.500 21.200z"/></svg>
                    Auto
                  </span>
                </div>
                <svg viewBox="0 0 448 512" class="absolute top-[24px] right-[24px] h-4 w-[14px]" fill="#d1d5db"><path d="M135.200 17.700C140.600 6.800 151.700 0 163.800 0H284.200c12.100 0 23.200 6.800 28.600 17.700L320 32h96c17.700 0 32 14.300 32 32s-14.300 32-32 32H32C14.300 96 0 81.700 0 64S14.300 32 32 32h96l7.200-14.300zM32 128H416V448c0 35.300-28.700 64-64 64H96c-35.300 0-64-28.700-64-64V128z"/></svg>
                <h3 class="mt-[4px] text-[14px] leading-[20px] font-semibold text-[#f1f5f9]">Оферта ИП Тест Тестов ТЕст</h3>
                <div class="mt-[12px] flex items-center">
                  <div class="relative flex h-[42px] w-[280px] rounded-lg border border-[#334155] bg-[#111827]">
                    <div class="flex flex-1 items-center pl-[12px] text-[12px] text-[#94a3b8]"><span>h</span></div>
                    <div class="absolute top-[17px] left-[15px] h-[6px] w-[205px] bg-[#3b4658] blur-[1px]"></div>
                    <div class="flex w-[41px] items-center justify-center border-l border-[#334155]">
                      <svg viewBox="0 0 17 17" class="h-[18px] w-[18px]"><rect x="6" y="1" width="10" height="11" rx="2.500" fill="#94a3b8"/><rect x="1.800" y="4.800" width="9" height="10.500" rx="2" fill="#111827" stroke="#cbd5e1" stroke-width="1.500"/></svg>
                    </div>
                  </div>
                  <svg viewBox="0 0 512 512" class="ml-[20px] h-[17px] w-[17px]" fill="#e2e8f0"><path d="M320 0c-17.700 0-32 14.300-32 32s14.300 32 32 32h82.700L201.400 265.400c-12.500 12.500-12.500 32.800 0 45.300s32.800 12.500 45.300 0L448 109.300V192c0 17.700 14.300 32 32 32s32-14.300 32-32V32c0-17.700-14.300-32-32-32H320zM80 32C35.800 32 0 67.800 0 112V432c0 44.200 35.800 80 80 80H400c44.200 0 80-35.800 80-80V320c0-17.700-14.300-32-32-32s-32 14.300-32 32V432c0 8.800-7.200 16-16 16H80c-8.800 0-16-7.200-16-16V112c0-8.800 7.200-16 16-16H192c17.700 0 32-14.300 32-32s-14.300-32-32-32H80z"/></svg>
                </div>
                <div class="mt-[8px] pr-[1px] text-right text-[10px] leading-[15px] text-[#475569]">28.11.2025</div>
              </article>
            </div>
          </div>
        </div>
      </div>
    </main>
  </div>
</body>
</html>
